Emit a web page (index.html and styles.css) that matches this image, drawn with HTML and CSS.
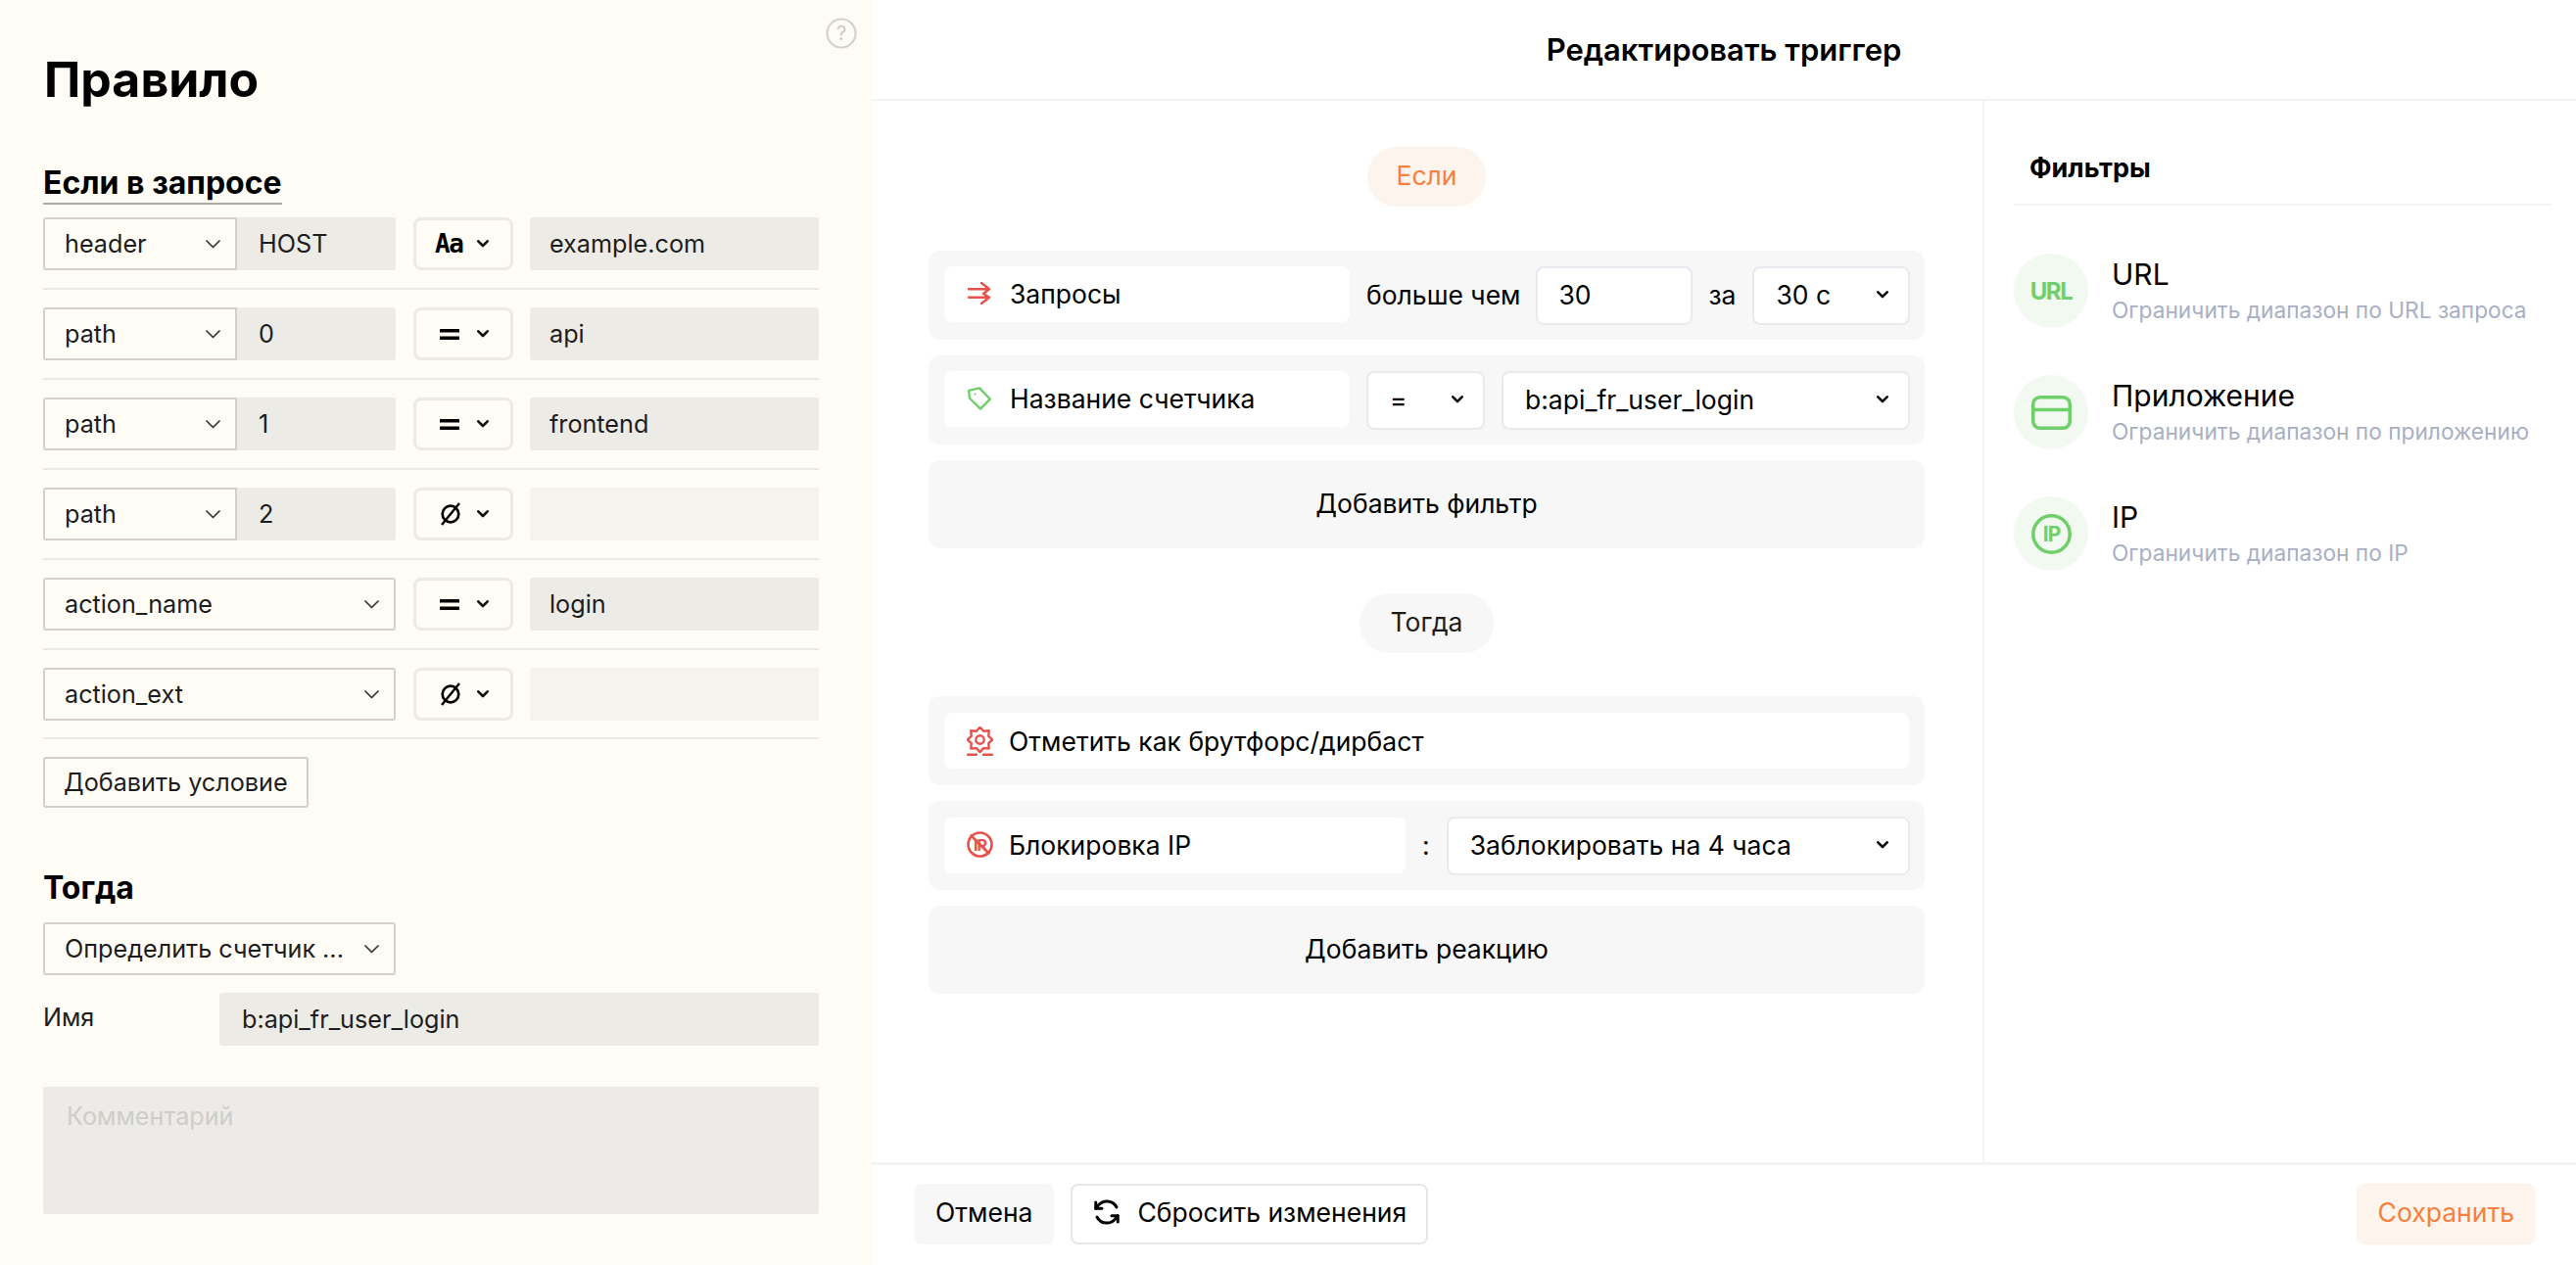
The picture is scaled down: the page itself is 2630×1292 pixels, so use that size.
FILE: index.html
```html
<!DOCTYPE html>
<html lang="ru">
<head>
<meta charset="utf-8">
<title>Редактировать триггер</title>
<link rel="stylesheet" href="styles.css">
</head>
<body>
<svg class="defs" aria-hidden="true">
  <symbol id="chev-thin" viewBox="0 0 15 9"><path d="M1 1l6.500 6.500L14 1" fill="none" stroke="#333" stroke-width="1.700" stroke-linecap="round" stroke-linejoin="round"/></symbol>
  <symbol id="chev-bold" viewBox="0 0 12 8"><path d="M1.300 1.300L6 6l4.700-4.700" fill="none" stroke="#111" stroke-width="2.600" stroke-linecap="round" stroke-linejoin="round"/></symbol>
  <symbol id="op-eq" viewBox="0 0 20 11"><path d="M1 1.800h18M1 9.200h18" fill="none" stroke="#000" stroke-width="3.600" stroke-linecap="round"/></symbol>
  <symbol id="op-null" viewBox="0 0 22 24"><circle cx="11" cy="12" r="8.300" fill="none" stroke="#000" stroke-width="2.700"/><path d="M2 23L20 1" fill="none" stroke="#000" stroke-width="2.400"/></symbol>
</svg>

<div class="app">
  <aside class="rule">
    <svg class="help" width="32" height="32" viewBox="0 0 32 32"><circle cx="16" cy="16" r="14.500" fill="none" stroke="#d2d2ce" stroke-width="2.200"/><text x="16" y="23" text-anchor="middle" class="help-q">?</text></svg>
    <h1 class="rule-title">Правило</h1>
    <h2 class="rule-h2 rule-h2-underlined">Если в запросе</h2>

    <div class="cond">
      <div class="cond-key">
        <div class="lsel lsel-joined">header<svg class="chev-thin"><use href="#chev-thin"/></svg></div>
        <input class="field field-arg" value="HOST" readonly>
      </div>
      <div class="opsel"><span class="op-aa">Aa</span><svg class="chev-bold"><use href="#chev-bold"/></svg></div>
      <input class="field field-val" value="example.com" readonly>
    </div>
    <div class="cond">
      <div class="cond-key">
        <div class="lsel lsel-joined">path<svg class="chev-thin"><use href="#chev-thin"/></svg></div>
        <input class="field field-arg" value="0" readonly>
      </div>
      <div class="opsel"><svg class="op-eq"><use href="#op-eq"/></svg><svg class="chev-bold"><use href="#chev-bold"/></svg></div>
      <input class="field field-val" value="api" readonly>
    </div>
    <div class="cond">
      <div class="cond-key">
        <div class="lsel lsel-joined">path<svg class="chev-thin"><use href="#chev-thin"/></svg></div>
        <input class="field field-arg" value="1" readonly>
      </div>
      <div class="opsel"><svg class="op-eq"><use href="#op-eq"/></svg><svg class="chev-bold"><use href="#chev-bold"/></svg></div>
      <input class="field field-val" value="frontend" readonly>
    </div>
    <div class="cond">
      <div class="cond-key">
        <div class="lsel lsel-joined">path<svg class="chev-thin"><use href="#chev-thin"/></svg></div>
        <input class="field field-arg" value="2" readonly>
      </div>
      <div class="opsel"><svg class="op-null"><use href="#op-null"/></svg><svg class="chev-bold"><use href="#chev-bold"/></svg></div>
      <input class="field field-val field-empty" readonly>
    </div>
    <div class="cond">
      <div class="cond-key">
        <div class="lsel">action_name<svg class="chev-thin"><use href="#chev-thin"/></svg></div>
      </div>
      <div class="opsel"><svg class="op-eq"><use href="#op-eq"/></svg><svg class="chev-bold"><use href="#chev-bold"/></svg></div>
      <input class="field field-val" value="login" readonly>
    </div>
    <div class="cond cond-last">
      <div class="cond-key">
        <div class="lsel">action_ext<svg class="chev-thin"><use href="#chev-thin"/></svg></div>
      </div>
      <div class="opsel"><svg class="op-null"><use href="#op-null"/></svg><svg class="chev-bold"><use href="#chev-bold"/></svg></div>
      <input class="field field-val field-empty" readonly>
    </div>

    <button class="add-cond" type="button">Добавить условие</button>

    <h2 class="rule-h2 rule-h2-then">Тогда</h2>
    <div class="then-select"><div class="lsel">Определить счетчик ...<svg class="chev-thin"><use href="#chev-thin"/></svg></div></div>
    <div class="name-row">
      <span class="name-label">Имя</span>
      <input class="field field-name" value="b:api_fr_user_login" readonly>
    </div>
    <textarea class="comment" placeholder="Комментарий" readonly></textarea>
  </aside>

  <main class="editor">
    <header class="editor-head">Редактировать триггер</header>
    <div class="editor-body">
      <section class="canvas">
        <div class="pill pill-if">Если</div>
        <div class="block">
          <div class="label label-fixed">
            <svg class="ico" width="24" height="24" viewBox="0 0 24 24" fill="none" stroke="#e8524d" stroke-width="2.400" stroke-linecap="round" stroke-linejoin="round"><path d="M1 7.300h21M1 15.700h21M14 1l8 6.300-6 4.700 6 3.700-8 6.300"/></svg>
            Запросы
          </div>
          <span class="word">больше чем</span>
          <input class="rinput" value="30" readonly>
          <span class="word">за</span>
          <div class="rsel rsel-fill">30 с<svg class="chev-bold"><use href="#chev-bold"/></svg></div>
        </div>
        <div class="block">
          <div class="label label-fixed">
            <svg class="ico" width="24" height="24" viewBox="0 0 24 24" fill="none" stroke="#6fcf6b" stroke-width="2.400" stroke-linejoin="round"><path d="M1.200 3.800L12 1.300l10.800 11.300L13 22.700 1.800 11.500z"/><circle cx="7.500" cy="7.500" r="1.100" fill="#6fcf6b" stroke="none"/></svg>
            Название счетчика
          </div>
          <div class="rsel rsel-op">=<svg class="chev-bold"><use href="#chev-bold"/></svg></div>
          <div class="rsel rsel-fill">b:api_fr_user_login<svg class="chev-bold"><use href="#chev-bold"/></svg></div>
        </div>
        <button class="add-block" type="button">Добавить фильтр</button>

        <div class="pill pill-then">Тогда</div>
        <div class="block">
          <div class="label label-grow label-icon-wide">
            <svg class="ico" width="27" height="30" viewBox="0 0 27 30" fill="none" stroke="#e8524d" stroke-width="2.400" stroke-linejoin="round" stroke-linecap="round"><path d="M13.500.8l3.600 3.900 5.600-.4-.4 5.600 4 3.600-4 3.600.4 5.400-5.600-.4-3.600 4-3.600-4-5.600.4.400-5.400-4-3.600 4-3.600-.4-5.600 5.600.4z"/><circle cx="13.500" cy="13.500" r="4.200"/><path d="M1 28.800h9M17 28.800h9"/></svg>
            Отметить как брутфорс/дирбаст
          </div>
        </div>
        <div class="block block-split">
          <div class="label label-icon-wide">
            <svg class="ico" width="27" height="27" viewBox="0 0 27 27" fill="none" stroke="#e8524d" stroke-width="2.600" stroke-linecap="round"><circle cx="13.500" cy="13.500" r="12"/><path d="M4.500 4.500l18 18"/><text x="13.500" y="19.500" text-anchor="middle" class="ico-r">IR</text></svg>
            Блокировка IP
          </div>
          <span class="word">:</span>
          <div class="rsel">Заблокировать на 4 часа<svg class="chev-bold"><use href="#chev-bold"/></svg></div>
        </div>
        <button class="add-block" type="button">Добавить реакцию</button>
      </section>

      <aside class="filters">
        <h3 class="filters-title">Фильтры</h3>
        <div class="filter">
          <div class="filter-ico"><span class="ico-url">URL</span></div>
          <div class="filter-text"><div class="filter-name">URL</div><div class="filter-desc">Ограничить диапазон по URL запроса</div></div>
        </div>
        <div class="filter">
          <div class="filter-ico"><svg width="41" height="35" viewBox="0 0 41 35" fill="none" stroke="#6fcf6b" stroke-width="3.500"><rect x="1.750" y="1.750" width="37.500" height="31.500" rx="7"/><path d="M1.750 14.500h37.500"/></svg></div>
          <div class="filter-text"><div class="filter-name">Приложение</div><div class="filter-desc">Ограничить диапазон по приложению</div></div>
        </div>
        <div class="filter">
          <div class="filter-ico"><svg width="41" height="41" viewBox="0 0 41 41" fill="none"><circle cx="20.500" cy="20.500" r="18.700" stroke="#6fcf6b" stroke-width="3.500"/><text x="20.500" y="28" text-anchor="middle" class="ico-ip">IP</text></svg></div>
          <div class="filter-text"><div class="filter-name">IP</div><div class="filter-desc">Ограничить диапазон по IP</div></div>
        </div>
      </aside>
    </div>
    <footer class="editor-foot">
      <button class="fbtn fbtn-cancel" type="button">Отмена</button>
      <button class="fbtn fbtn-reset" type="button">
        <svg width="30" height="30" viewBox="0 0 24 24" fill="none" stroke="#000" stroke-width="2.400" stroke-linecap="round" stroke-linejoin="round"><path d="M20 8A9 9 0 0 0 5 6.500L3 9"/><path d="M3 4v5h5"/><path d="M4 16a9 9 0 0 0 15 1.500L21 15"/><path d="M21 20v-5h-5"/></svg>
        Сбросить изменения
      </button>
      <button class="fbtn fbtn-save" type="button">Сохранить</button>
    </footer>
  </main>
</div>
</body>
</html>
```

FILE: styles.css
```css
* { box-sizing: border-box; }
html, body { margin: 0; height: 100%; }
body { font-family: Inter, "Noto Sans", sans-serif; font-size: 26.500px; color: #1d1d1d; background: #fff; overflow: hidden; }
.defs { display: none; }
input, textarea, button { font: inherit; color: inherit; margin: 0; outline: none; }

.app { display: flex; height: 1292px; }

/* Left rule panel */
.rule { position: relative; flex: 0 0 890px; width: 890px; min-width: 0; height: 100%; padding: 51px 54px 0 44px; background: #fffcf5; font-size: 25.200px; }
.help { position: absolute; top: 18px; right: 15px; }
.help-q { font-family: Inter, sans-serif; font-size: 20px; fill: #c8c8c4; }
.rule-title { margin: 0 0 0 1px; font-size: 50px; line-height: 60px; font-weight: 650; color: #000; }
.rule-h2 { margin: 0; font-size: 32px; line-height: 40px; font-weight: 650; color: #000; }
.rule-h2-underlined { display: table; margin-top: 56px; margin-bottom: 13px; border-bottom: 2px solid #a9a9a6; }
.rule-h2-then { margin-top: 62px; margin-bottom: 15px; }

.cond { display: flex; align-items: stretch; height: 74px; padding-bottom: 18px; border-bottom: 2px solid #ebeae6; }
.cond + .cond { margin-top: 18px; }
.cond-last { height: 73px; padding-bottom: 17px; }
.cond-key { display: flex; flex: 0 0 360px; }
.lsel { display: flex; align-items: center; justify-content: space-between; flex: 1; height: 54px; padding: 0 15px 0 20px; background: #fffcf5; border: 2px solid #d1d0cc; border-radius: 3px; white-space: nowrap; }
.lsel-joined { flex: 0 0 198px; border-radius: 3px 0 0 3px; }
.chev-thin { width: 15px; height: 9px; flex: none; }
.field { width: 0; height: 54px; padding: 0 20px; border: 0; border-radius: 3px; background: #edebe6; }
.field-arg { flex: 0 0 162px; padding-left: 22px; border-radius: 0 3px 3px 0; }
.field-val { flex: 1; min-width: 0; margin-left: 17px; }
.field-empty { background: #f5f3ec; }
.opsel { display: flex; align-items: center; justify-content: space-between; flex: 0 0 102px; height: 54px; margin-left: 18px; padding: 0 22px 0 24px; border: 3px solid #ebeae6; border-radius: 8px; }
.op-aa { font-family: "DejaVu Sans Mono", monospace; font-weight: 700; font-size: 26px; letter-spacing: -1.500px; color: #000; margin-left: -5px; }
.op-eq { width: 20px; height: 11px; }
.op-null { width: 22px; height: 24px; }
.chev-bold { width: 12px; height: 8px; flex: none; }

.add-cond { display: block; height: 52px; margin-top: 18px; padding: 0 19px; background: transparent; border: 2px solid #d1d0cc; border-radius: 3px; }
.then-select { display: flex; width: 360px; }
.name-row { display: flex; align-items: center; margin-top: 18px; }
.name-label { flex: 0 0 180px; margin-top: -4px; }
.field-name { flex: 1; min-width: 0; padding-left: 23px; }
.comment { display: block; width: 100%; height: 130px; margin-top: 42px; padding: 12px 24px; border: 0; border-radius: 3px; background: #ecebe7; line-height: 36px; resize: none; }
.comment::placeholder { color: #cfcdc9; opacity: 1; }

/* Right editor */
.editor { display: flex; flex-direction: column; flex: 1; min-width: 0; height: 100%; }
.editor-head { flex: 0 0 103px; display: flex; align-items: center; justify-content: center; font-size: 31px; font-weight: 600; color: #000; border-bottom: 2px solid #f2f3f3; }
.editor-body { flex: 1; display: flex; min-height: 0; }
.canvas { display: flex; flex-direction: column; align-items: stretch; flex: 0 0 1136px; min-width: 0; padding: 47px 59px 0 58px; border-right: 2px solid #f2f3f3; }
.pill { align-self: center; height: 61px; display: flex; align-items: center; padding: 0 30px 3px; border-radius: 30px; }
.pill-if { margin-bottom: 45px; color: #f5813f; background: #fdf4ee; }
.pill-then { margin-top: 46px; margin-bottom: 44px; background: #f7f7f7; padding: 0 31px 3px; }
.block { display: flex; align-items: center; gap: 17px; height: 91px; padding: 0 15px 0 16px; margin-bottom: 16px; background: #f7f7f7; border-radius: 12px; }
.block-split { display: grid; grid-template-columns: 471px auto 1fr; }
.label { display: flex; align-items: center; gap: 19px; height: 57px; padding-left: 24px; background: #fff; border-radius: 8px; white-space: nowrap; color: #000; }
.label-grow { flex: 1; min-width: 0; margin-right: 1px; }
.label-fixed { flex: 0 0 414px; margin-top: -2px; padding-bottom: 1px; }
.label-icon-wide { gap: 16px; padding-left: 23px; }
.block-split .label { padding-bottom: 2px; }
.ico { flex: none; }
.ico-r { font-family: Inter, sans-serif; font-size: 16px; font-weight: 700; fill: #e8524d; stroke: none; letter-spacing: -1px; }
.word { color: #000; white-space: nowrap; margin-top: -2px; }
.rinput { width: 160px; flex: none; height: 60px; margin-left: -2px; padding: 0 22px 2px; border: 2px solid #e9e9ef; border-radius: 8px; background: #fff; color: #000; }
.rsel { display: flex; align-items: center; justify-content: space-between; height: 60px; padding: 0 20px 2px 22px; background: #fff; border: 2px solid #e9e9ef; border-radius: 8px; color: #000; white-space: nowrap; }
.rsel-op { flex: 0 0 121px; }
.rsel-fill { flex: 1; min-width: 0; }
.add-block { height: 90px; padding: 0 0 2px; background: #f7f7f7; border: 0; border-radius: 12px; color: #000; }

/* Filters */
.filters { flex: 1; min-width: 0; padding: 0 25px 0 30px; }
.filters-title { margin: 0 0 49px; height: 107px; padding: 46px 0 0 16px; font-size: 27px; line-height: 46px; font-weight: 700; color: #000; border-bottom: 2px solid #f2f3f3; }
.filter { display: flex; align-items: center; gap: 24px; height: 76px; margin-bottom: 48px; }
.filter-ico { display: flex; align-items: center; justify-content: center; flex: 0 0 76px; height: 76px; border-radius: 50%; background: #f2f9f0; }
.ico-url { font-size: 24px; font-weight: 700; letter-spacing: -1.500px; color: #6fcf6b; }
.ico-ip { font-family: Inter, sans-serif; font-size: 21px; font-weight: 700; fill: #6fcf6b; letter-spacing: -1px; }
.filter-name { font-size: 30px; line-height: 38px; color: #000; }
.filter-desc { font-size: 22.700px; line-height: 34px; margin-top: 1px; color: #a9afc3; white-space: nowrap; }

/* Footer */
.editor-foot { flex: 0 0 105px; display: flex; align-items: center; gap: 17px; padding: 0 41px 3px 43px; border-top: 3px solid #f2f3f3; }
.fbtn { display: flex; align-items: center; height: 62px; padding: 0 22px 3px; border: 0; border-radius: 8px; white-space: nowrap; color: #000; }
.fbtn-cancel { background: #f7f7f7; }
.fbtn-reset { gap: 16px; background: #fff; border: 2px solid #e6e6ec; padding: 0 20px 3px; }
.fbtn-save { margin-left: auto; background: #fdf4ee; color: #f5813f; }
```
